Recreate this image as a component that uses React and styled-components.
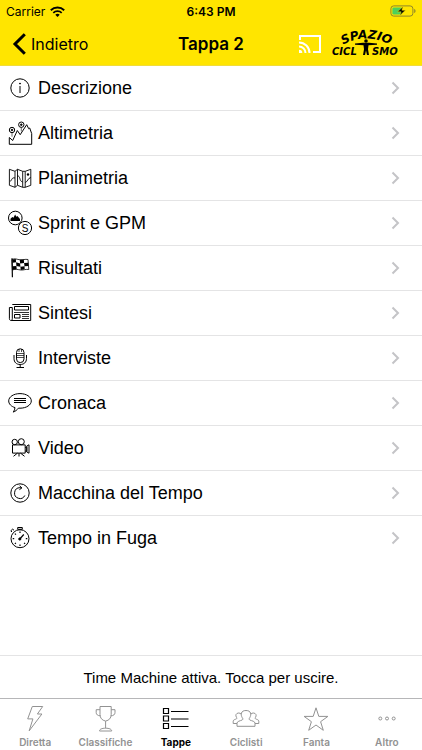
import React, { useState } from 'react';
import styled, { createGlobalStyle, ThemeProvider } from 'styled-components';

const theme = {
  yellow: '#ffe500',
  line: '#e4e4e5',
  barLine: '#b6b6b8',
  grey: '#929292',
  chevron: '#c4c4c7',
  sans: '"Liberation Sans", Arial, sans-serif',
  system: 'Inter, Roboto, sans-serif',
};

const GlobalStyle = createGlobalStyle`
  * {
    box-sizing: border-box;
  }
  body {
    margin: 0;
    background: #ffffff;
    color: #000000;
  }
  button {
    margin: 0;
    padding: 0;
    border: 0;
    background: none;
    color: inherit;
    font: inherit;
    cursor: pointer;
  }
`;

const Page = styled.div`
  display: flex;
  flex-direction: column;
  min-height: 100vh;
  font-family: ${({ theme }) => theme.sans};
`;

// ------------- header -------------

const Header = styled.header`
  background: ${({ theme }) => theme.yellow};
  font-family: ${({ theme }) => theme.system};
  border-bottom: 1px solid #f0dc3c;
`;

const StatusBar = styled.div`
  display: grid;
  grid-template-columns: 1fr auto 1fr;
  align-items: center;
  height: 22px;
  padding: 0 6px;
  font-size: 12px;
`;

const Carrier = styled.div`
  display: flex;
  align-items: center;
  gap: 5px;
`;

const Clock = styled.div`
  font-weight: 600;
`;

const Battery = styled.svg`
  justify-self: end;
`;

const NavBar = styled.div`
  display: grid;
  grid-template-columns: 1fr auto 1fr;
  align-items: center;
  height: 43px;
  padding: 0 12px;
`;

const BackButton = styled.button`
  display: flex;
  align-items: center;
  justify-self: start;
  gap: 4px;
  font-size: 16px;
`;

const Title = styled.h1`
  margin: 0;
  font-size: 17px;
  font-weight: 600;
`;

const NavActions = styled.div`
  display: flex;
  align-items: center;
  justify-self: end;
  gap: 8px;
  padding-right: 8px;
`;

const CastButton = styled.button`
  display: flex;
`;

// ------------- menu -------------

const Menu = styled.ul`
  flex: 1;
  margin: 0;
  padding: 0;
  list-style: none;
`;

const MenuItem = styled.li`
  &:not(:last-child) {
    border-bottom: 1px solid ${({ theme }) => theme.line};
  }
`;

const MenuLink = styled.a`
  display: flex;
  align-items: center;
  gap: 5px;
  height: 44px;
  padding: 0 22px 0 7px;
  color: inherit;
  font-size: 18px;
  text-decoration: none;
`;

const MenuLabel = styled.span`
  flex: 1;
`;

const LineIcon = styled.svg`
  flex: none;
  fill: none;
  stroke: currentColor;
  stroke-width: 1;
`;

const Chevron = styled.svg`
  fill: none;
  stroke: ${({ theme }) => theme.chevron};
  stroke-width: 2;
`;

// ------------- footer -------------

const Notice = styled.button`
  height: 43px;
  border-top: 1px solid ${({ theme }) => theme.line};
  font-size: 15px;
`;

const TabBar = styled.nav`
  display: grid;
  grid-template-columns: repeat(6, 1fr);
  height: 52px;
  padding-top: 6px;
  border-top: 1px solid ${({ theme }) => theme.barLine};
  font-family: ${({ theme }) => theme.system};
`;

const Tab = styled.button`
  display: flex;
  flex-direction: column;
  align-items: center;
  gap: 3px;
  color: ${({ theme, $active }) => ($active ? '#000000' : theme.grey)};
  font-size: 10px;
  font-weight: ${({ $active }) => ($active ? 700 : 600)};
  line-height: 13px;
`;

// ------------- drawings -------------

const menuItems = [
  {
    label: 'Descrizione',
    icon: (
      <>
        <circle cx="13" cy="13" r="9.2" />
        <path d="M13 11v7" />
        <circle cx="13" cy="8.6" r=".5" fill="currentColor" />
      </>
    ),
  },
  {
    label: 'Altimetria',
    icon: (
      <>
        <path d="M2.3 24.3V17.5L5.7 20.5l4.6-10 2.9 4.2 6.5-10 2 4 1-.7 2 5.6v10.7z" />
        <circle cx="5" cy="10" r="2.7" />
        <circle cx="5" cy="10" r=".8" fill="currentColor" />
        <circle cx="14.3" cy="4.7" r="2.7" />
        <circle cx="14.3" cy="4.7" r=".8" fill="currentColor" />
        <path d="M5 12.7v4M14.3 7.4v4" strokeWidth=".6" />
      </>
    ),
  },
  {
    label: 'Planimetria',
    icon: (
      <>
        <path
          d="M2.4 4.3l5.6 2v16l-5.6-2zM10.5 4.3l5.2 2v16l-5.2-2zM8 6.3l2.5-2M8 22.3l2.5-2M18.2 6.3l5.6-2v16l-5.6 2zM15.7 6.3h2.5M15.7 22.3h2.5"
          strokeWidth=".9"
        />
        <path
          d="M3 16.5c2-1 1.5-4.5 5-3.5M10.5 11c3-.5 1.500 5 5 6M18.2 17.5c3-1 2-4 5.6-5"
          strokeWidth=".9"
        />
        <circle cx="21" cy="9.5" r="1.2" fill="currentColor" stroke="none" />
      </>
    ),
  },
  {
    label: 'Sprint e GPM',
    icon: (
      <>
        <circle cx="8.3" cy="8" r="6.8" />
        <path
          d="M3.5 11V8.8l1.8-1.7 1.2.6 1.600-3.200 1.300 2.200 1-.8 2.600 3V11z"
          fill="currentColor"
          stroke="none"
        />
        <circle cx="18" cy="18" r="6.6" fill="#ffffff" />
        <text
          x="18"
          y="21.6"
          fontSize="10"
          textAnchor="middle"
          fill="currentColor"
          stroke="none"
        >
          S
        </text>
      </>
    ),
  },
  {
    label: 'Risultati',
    icon: (
      <>
        <path d="M5 3.3l.4 19" strokeWidth="1.2" />
        <path
          d="M5 4.5c3-1.500 5 0 8 .3s5-.9 8-.3l.8 10c-3-.6-5 .8-8 .5s-5-1.500-8.300 0z"
          strokeWidth=".8"
        />
        <path
          d="M5.3 4.5l3.500-.6.300 3.400-3.500.5zM12.800 4.800l4-.3.300 3.600-4 .3zM9.100 7.300l4 1.100.3 3.400-4-.9zM17.100 8.100l4.200-.3.200 3.300-4 .1zM5.500 11.200l3.900-.3.300 3.300-3.900.6zM13.400 11.800l4.100-.6.200 3.100-4 .6z"
          fill="currentColor"
          stroke="none"
        />
      </>
    ),
  },
  {
    label: 'Sintesi',
    icon: (
      <>
        <path d="M5.3 4.5h18.4v16H4.2c-1.2 0-1.8-.8-1.8-1.8V7.5h2.900v11.200c0 1-.3 1.500-1 1.800" />
        <path d="M7.5 6.5h14v3.5h-14zM7.5 14.5h5.5v3.5H7.5z" />
        <path d="M7 12.5h15M15 14.5h7M15 16.5h7M15 18.5h7" strokeWidth=".8" />
      </>
    ),
  },
  {
    label: 'Interviste',
    icon: (
      <>
        <rect x="9.5" y="3.8" width="7.5" height="13.8" rx="3.7" />
        <path
          d="M9.5 8.5H17M9.5 10.5H17M9.5 12.5H17M12 4v3M14.5 4v3"
          strokeWidth=".7"
        />
        <path d="M7 10v3.5c0 3.8 2.400 6 6.200 6s6.300-2.200 6.300-6V10M13.200 19.500v3M9.500 22.500H17" />
      </>
    ),
  },
  {
    label: 'Cronaca',
    icon: (
      <>
        <path d="M8 17.6C4.3 16.5 1.7 14 1.7 10.9 1.7 6.8 6.7 3.6 13 3.6s11.3 3.2 11.3 7.3-5 7.3-11.3 7.3l-1.500-.1c-1.500 1.900-3.100 3.200-5.200 4 1-1.400 1.600-3 1.700-4.500z" />
        <path d="M7 8.5h12M7 10.5h12M7 12.5h12" />
      </>
    ),
  },
  {
    label: 'Video',
    icon: (
      <>
        <circle cx="7.7" cy="7" r="2.7" />
        <circle cx="14.3" cy="6.7" r="3" />
        <path d="M5.5 9.9h12.7v8.2H5.5zM18.2 12.5l1.6-.3v4.2l-1.6-.4M19.8 11l2.2-1.2v8.4l-2.2-1.2z" />
        <path d="M12 18.1v3.4M10.5 18.1l-4 3.2M13.5 18.1l4 3.2" />
      </>
    ),
  },
  {
    label: 'Macchina del Tempo',
    icon: (
      <>
        <circle cx="13" cy="13" r="9.2" />
        <path d="M17.8 15.5A5.4 5.4 0 1 1 13 7.7l1.7.2M12.6 5.8l2.300 2.100-2.500 1.800" />
      </>
    ),
  },
  {
    label: 'Tempo in Fuga',
    icon: (
      <>
        <circle cx="13" cy="13.7" r="9" />
        <path d="M10.7 2.5h4.6v1.8h-4.6zM13 4.3v1M5 7L3.8 5.8l1.9-1.7L7 5.3" />
        <path d="M12.3 14.5l4.500-5" strokeWidth="1.2" />
        <circle cx="12.8" cy="14" r="1.1" fill="currentColor" />
        <path
          d="M13 6.5V8M13 19.5V21M5.7 13.7h1.5M18.8 13.7h1.5M7.9 8.6l1 1M17.1 17.8l1 1M7.9 18.8l1-1"
          strokeWidth="1.2"
        />
      </>
    ),
  },
];

const tabs = [
  {
    label: 'Diretta',
    icon: <path d="M11.3 1.5h10.4L16.4 9h4.5L8.2 25.8l3.7-11.9H6.7z" />,
  },
  {
    label: 'Classifiche',
    icon: (
      <path d="M9 1.5h11.2v8c0 3.500-2 5.800-5.600 6.600-3.600-.8-5.600-3.100-5.600-6.600zM9 4.700H5.200v2.800c0 2 1.500 3.300 4.200 3.300M20.200 4.700H24v2.800c0 2-1.500 3.300-4.200 3.300M14.600 16.100v7.100M8.500 26c0-1.800 2.500-2.800 6.100-2.800s6.100 1 6.100 2.800z" />
    ),
  },
  {
    label: 'Tappe',
    icon: (
      <path
        d="M1.5 3.5h5v5h-5zM1.5 11h5v5h-5zM1.5 18.5h5v5h-5zM9 6.5h17.5M9 14h17.5M9 21.5h17.5"
        strokeWidth="1.2"
      />
    ),
  },
  {
    label: 'Ciclisti',
    icon: (
      <>
        <path d="M5 21.3h18v-3.2c0-1.7-3-2.2-5.2-3.1-.8-.4-.8-1.7 0-2.4 1.7-2.8 1.5-7.100-3.800-7.100s-5.500 4.300-3.800 7.100c.8.7.8 2 0 2.400C8 15.900 5 16.400 5 18.100z" />
        <path d="M5 18.5H1.2v-2.3c0-1.500 2-1.700 3.200-2.300.6-.5.500-1 0-1.700C3.200 10.500 4 8 6.700 8c1 0 1.800.4 2.300 1M23 18.500h3.800v-2.300c0-1.500-2-1.700-3.200-2.300-.6-.5-.5-1 0-1.700C24.800 10.500 24 8 21.300 8c-1 0-1.800.4-2.300 1" />
      </>
    ),
  },
  {
    label: 'Fanta',
    icon: (
      <path d="M14 2.8l2.8 8.6h9.100l-7.300 5.300 2.700 8.600L14 20l-7.300 5.300 2.700-8.600-7.300-5.300h9.100z" />
    ),
  },
  {
    label: 'Altro',
    icon: (
      <>
        <circle cx="7.3" cy="13.5" r="1.5" />
        <circle cx="14" cy="13.5" r="1.5" />
        <circle cx="20.7" cy="13.5" r="1.5" />
      </>
    ),
  },
];

const WifiIcon = () => (
  <svg width="15" height="11" viewBox="0 0 15 11" fill="none" stroke="#000000">
    <path d="M.8 4.2a9.8 9.8 0 0 1 13.4 0" strokeWidth="1.9" />
    <path d="M3.3 6.8a6.2 6.2 0 0 1 8.4 0" strokeWidth="1.8" />
    <path d="M7.5 11L5.3 8.7a3.3 3.3 0 0 1 4.4 0z" fill="#000000" stroke="none" />
  </svg>
);

const BatteryIcon = () => (
  <Battery width="26" height="12" viewBox="0 0 26 12">
    <rect x=".9" y=".9" width="22" height="10.2" rx="2.8" fill="none" stroke="#8f852a" />
    <rect x="2.4" y="2.4" width="9.6" height="7.2" rx="1.3" fill="#4cd05c" />
    <path d="M24.2 4v4c.9-.3 1.3-1.1 1.3-2s-.4-1.7-1.3-2z" fill="#8f852a" />
    <path
      d="M13.2 1.5L7.5 6.8h3.6L9.8 10.500l5.700-5.300h-3.600z"
      fill="#000000"
      stroke="#ffe500"
      strokeWidth=".5"
    />
  </Battery>
);

const CastIcon = () => (
  <svg width="24" height="20" viewBox="0 0 24 20" fill="none" stroke="#ffffff" strokeWidth="2">
    <path d="M2 6V2h20v16h-7" />
    <path d="M1 8.5A10.5 10.5 0 0 1 11.5 19M1 12.5A6.5 6.5 0 0 1 7.5 19" />
    <path d="M1 15.7A3.3 3.3 0 0 1 4.3 19H1z" fill="#ffffff" stroke="none" />
  </svg>
);

const Logo = () => (
  <svg
    width="72"
    height="34"
    viewBox="0 0 72 34"
    fontFamily="DejaVu Sans, sans-serif"
    fontSize="10"
    fontStyle="italic"
    fontWeight="700"
  >
    <path id="logo-arch" d="M6 22Q36 1 67 22" fill="none" />
    <text fontSize="12">
      <textPath href="#logo-arch" startOffset="50%" textAnchor="middle">
        SPAZIO
      </textPath>
    </text>
    <text x="2" y="28">
      CICL
    </text>
    <text x="42" y="28">
      SMO
    </text>
    <circle cx="36" cy="14" r="1.8" />
    <path d="M25 16.5l8-.8h6l8 .8v1.200l-8.500.5-.5 4 1 5.800h-2L36 23.500 35 28h-2l1-5.800-.5-4-8.500-.5z" />
  </svg>
);

function App() {
  const [activeTab, setActiveTab] = useState('Tappe');

  return (
    <ThemeProvider theme={theme}>
      <GlobalStyle />
      <Page>
        <Header>
          <StatusBar>
            <Carrier>
              Carrier
              <WifiIcon />
            </Carrier>
            <Clock>6:43 PM</Clock>
            <BatteryIcon />
          </StatusBar>
          <NavBar>
            <BackButton type="button">
              <svg
                width="15"
                height="22"
                viewBox="0 0 15 22"
                fill="none"
                stroke="#000000"
                strokeWidth="3"
              >
                <path d="M12.8 1.3L3 11l9.8 9.7" />
              </svg>
              Indietro
            </BackButton>
            <Title>Tappa 2</Title>
            <NavActions>
              <CastButton type="button" aria-label="Cast">
                <CastIcon />
              </CastButton>
              <Logo />
            </NavActions>
          </NavBar>
        </Header>

        <Menu>
          {menuItems.map(({ label, icon }) => (
            <MenuItem key={label}>
              <MenuLink href="#">
                <LineIcon width="26" height="26" viewBox="0 0 26 26">
                  {icon}
                </LineIcon>
                <MenuLabel>{label}</MenuLabel>
                <Chevron width="9" height="14" viewBox="0 0 9 14">
                  <path d="M1.5 1.5L7 7l-5.5 5.5" />
                </Chevron>
              </MenuLink>
            </MenuItem>
          ))}
        </Menu>

        <Notice type="button">Time Machine attiva. Tocca per uscire.</Notice>

        <TabBar>
          {tabs.map(({ label, icon }) => (
            <Tab
              key={label}
              type="button"
              $active={label === activeTab}
              onClick={() => setActiveTab(label)}
            >
              <LineIcon width="28" height="28" viewBox="0 0 28 28">
                {icon}
              </LineIcon>
              {label}
            </Tab>
          ))}
        </TabBar>
      </Page>
    </ThemeProvider>
  );
}

export default App;
